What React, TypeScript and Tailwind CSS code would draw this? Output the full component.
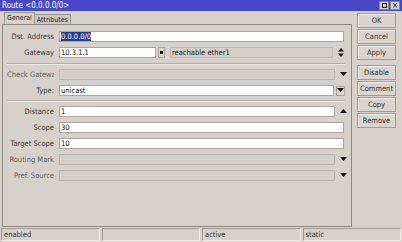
import React from 'react';

const Down = () => (
  <svg width="7" height="5" viewBox="0 0 7 5"><path d="M0 0h7L3.5 4z" fill="#111" /></svg>
);
const Up = () => (
  <svg width="7" height="5" viewBox="0 0 7 5"><path d="M0 4h7L3.5 0z" fill="#111" /></svg>
);
const UpDown = () => (
  <svg width="6" height="9" viewBox="0 0 6 9"><path d="M0 3.5h6L3 0zM0 5.5h6L3 9z" fill="#111" /></svg>
);

const Label = ({ text, muted }: { text: string; muted?: boolean }) => (
  <div
    className={`w-[47px] shrink-0 overflow-hidden whitespace-nowrap text-right leading-[11px] ${muted ? 'text-[#5e5c57]' : 'text-[#3a3936]'}`}
  >
    {text}
  </div>
);

const Input = ({ value, w, disabled }: { value?: string; w: string; disabled?: boolean }) => (
  <div
    className={`${w} h-[11px] shrink-0 border px-[1px] leading-[9px] ${disabled ? 'border-[#bdb9b2] bg-[#d4d0c9]' : 'border-[#aaa69f] bg-white'} text-[#222]`}
  >
    {value}
  </div>
);

const Side = ({ children }: { children: React.ReactNode }) => (
  <div className="flex w-[10px] justify-center">{children}</div>
);

const Row = ({ children }: { children: React.ReactNode }) => (
  <div className="flex h-[11px] shrink-0 items-center gap-[5px]">{children}</div>
);

const Btn = ({ text }: { text: string }) => (
  <div className="flex h-[15px] w-[39px] items-center justify-center border border-[#a19d95] bg-[#d9d5ce] text-[#333] shadow-[inset_1px_1px_0_#f2f0ec]">
    {text}
  </div>
);

export default function App() {
  return (
    <div className="flex h-[242px] w-[402px] flex-col bg-[#d6d2cb] font-['DejaVu_Sans_Condensed','DejaVu_Sans',sans-serif] text-[7.5px]">
      <div className="flex h-[11px] items-center justify-between bg-[#4848c6] pl-[2px] pr-[2px] text-white">
        <span className="text-[8px] leading-[11px]">Route &lt;0.0.0.0/0&gt;</span>
        <div className="flex gap-[1px]">
          <div className="flex h-[9px] w-[10px] items-center justify-center border border-[#888] bg-[#d6d2cb]">
            <div className="h-[5px] w-[5px] border border-[#222]" />
          </div>
          <div className="flex h-[9px] w-[10px] items-center justify-center border border-[#888] bg-[#d6d2cb] text-[8px] leading-none text-[#111]">
            ×
          </div>
        </div>
      </div>

      <div className="flex flex-1">
        <div className="ml-[2px] mt-[1px] flex w-[350px] flex-col">
          <div className="flex h-[12px] items-end pl-[2px] text-[7px]">
            <div className="h-[12px] border border-b-0 border-[#9c988f] bg-[#d6d2cb] px-[2px] leading-[11px] text-[#222]">General</div>
            <div className="h-[10px] border border-b-0 border-l-0 border-[#9c988f] bg-[#ccc8c1] px-[2px] leading-[10px] text-[#222]">Attributes</div>
          </div>
          <div className="flex h-[203px] flex-col gap-[5px] border border-[#8e8a83] pl-[4px] pr-[6px] pt-[6px]">
            <Row>
              <Label text="Dst. Address" />
              <div className="flex h-[11px] w-[285px] items-center border border-[#aaa69f] bg-white px-[1px]">
                <span className="bg-[#2c3b86] leading-[9px] text-white">0.0.0.0/0</span>
              </div>
            </Row>
            <Row>
              <Label text="Gateway" />
              <Input value="10.3.1.1" w="w-[97px]" />
              <div className="-ml-[3px] flex h-[11px] w-[9px] items-center justify-center border border-[#aaa69f] bg-[#dcd8d1]">
                <div className="h-[3px] w-[3px] bg-[#111]" />
              </div>
              <Input value="reachable ether1" w="w-[163px]" disabled />
              <Side><UpDown /></Side>
            </Row>
            <div className="-mb-[1px] h-[2px] shrink-0 border-t border-b border-t-[#b3afa8] border-b-[#ece9e4]" />
            <Row>
              <Label text="Check Gateway" muted />
              <Input w="w-[276px]" disabled />
              <Side><Down /></Side>
            </Row>
            <Row>
              <Label text="Type:" />
              <Input value="unicast" w="w-[275px]" />
              <div className="-ml-[3px] flex h-[10px] w-[9px] items-center justify-center border border-[#aaa69f] bg-[#dcd8d1]">
                <Down />
              </div>
            </Row>
            <div className="-my-[1px] h-[2px] shrink-0 border-t border-b border-t-[#b3afa8] border-b-[#ece9e4]" />
            <Row>
              <Label text="Distance" />
              <Input value="1" w="w-[276px]" />
              <Side><Up /></Side>
            </Row>
            <Row>
              <Label text="Scope" />
              <Input value="30" w="w-[285px]" />
            </Row>
            <Row>
              <Label text="Target Scope" />
              <Input value="10" w="w-[285px]" />
            </Row>
            <Row>
              <Label text="Routing Mark" muted />
              <Input w="w-[276px]" disabled />
              <Side><Down /></Side>
            </Row>
            <Row>
              <Label text="Pref. Source" muted />
              <Input w="w-[276px]" disabled />
              <Side><Down /></Side>
            </Row>
          </div>
        </div>

        <div className="ml-[5px] mt-[2px] flex flex-col">
          <div className="flex flex-col gap-[1px]">
            <Btn text="OK" />
            <Btn text="Cancel" />
            <Btn text="Apply" />
          </div>
          <div className="mt-[5px] flex flex-col gap-[1px]">
            <Btn text="Disable" />
            <Btn text="Comment" />
            <Btn text="Copy" />
            <Btn text="Remove" />
          </div>
        </div>
      </div>

      <div className="flex h-[14px] gap-[2px] px-[1px] pb-[1px]">
        {['enabled', '', 'active', 'static'].map((t, i) => (
          <div
            key={i}
            className="flex-1 border border-t-[#a09c95] border-l-[#a09c95] border-r-[#f0eee9] border-b-[#f0eee9] pl-[2px] leading-[11px] text-[#333]"
          >
            {t}
          </div>
        ))}
      </div>
    </div>
  );
}
